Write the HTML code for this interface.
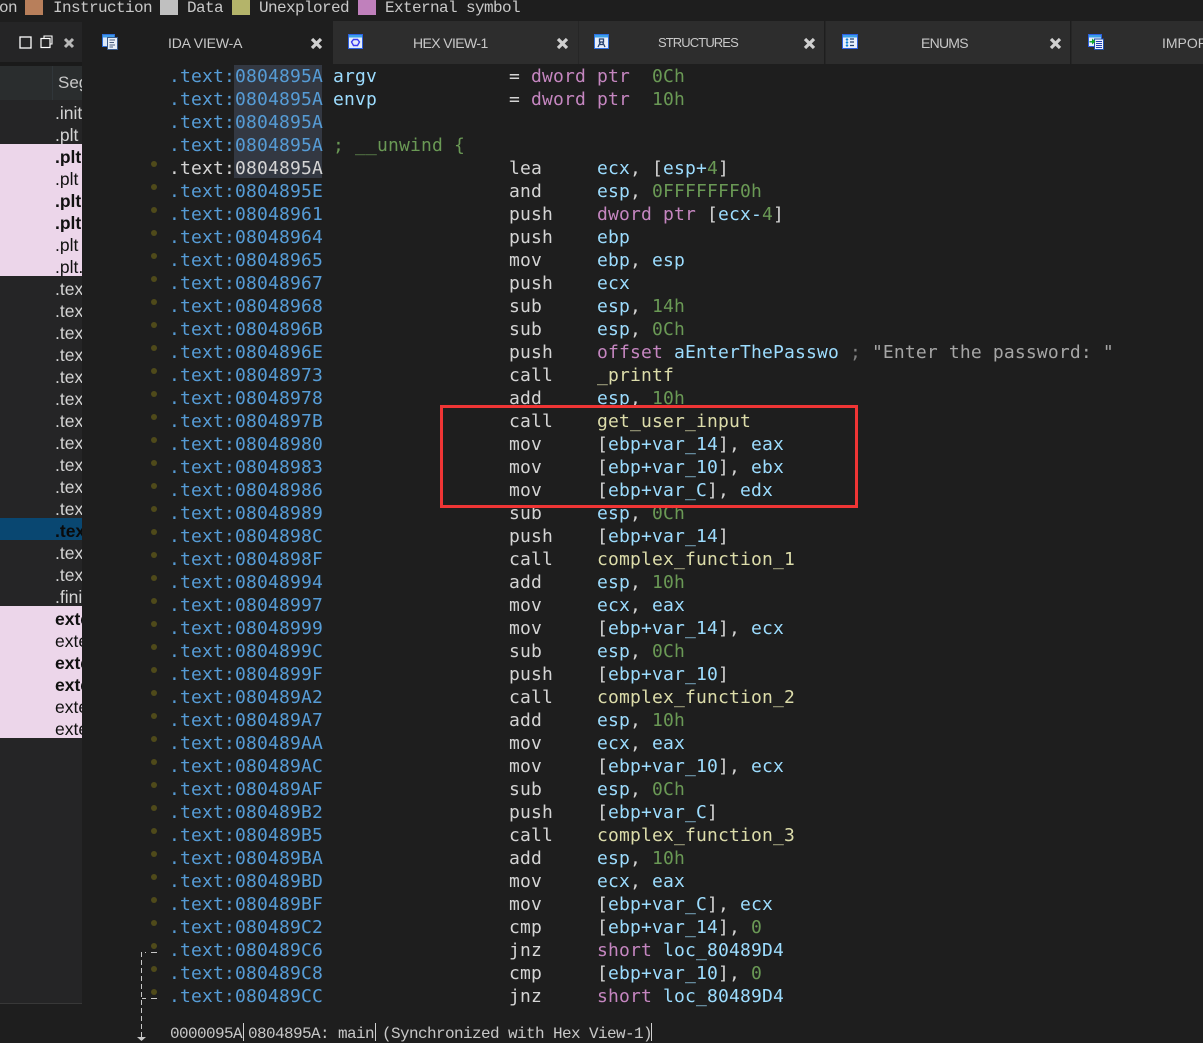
<!DOCTYPE html>
<html><head><meta charset="utf-8"><style>
html,body{margin:0;padding:0;background:#1e1e1e}
body{width:1203px;height:1041px;position:relative;overflow:hidden}
div,span.ab,svg{position:absolute}
.lg{font:16px/15px "Liberation Mono",monospace;letter-spacing:-.6px;color:#c8c8c8;top:1px;white-space:pre}
.sw{top:0;width:18px;height:15px}
.tab{top:21px;height:43px;width:245px;background:#2d2d2d}
.tt{top:34px;font:14px/18px "Liberation Sans",sans-serif;color:#c8c8c8;white-space:pre}
.x{top:37px;width:13px;height:13px}
.ic{top:34px;width:16px;height:16px}
#lp{left:0;top:100px;width:82px;height:903px;background:#252526;overflow:hidden}
#lp div{left:0;width:82px;height:22px;padding-left:55px;box-sizing:border-box;font:17.500px/26px "Liberation Sans",sans-serif;color:#d4d4d4;white-space:pre}
#lp .p{background:#ecd6ea;color:#111}
#lp .b{font-weight:bold}
#lp .s{background:#094771;color:#0a0a0a;font-weight:bold}
#c{left:0;top:0;width:1203px;height:1041px;font:18px/23px "DejaVu Sans Mono",monospace;letter-spacing:.16px}
#c div{height:23px;left:0;width:1203px}
#c span{position:absolute;top:0;white-space:pre}
#c .a{left:169px;color:#569cd6}
#c .n{left:333px;color:#9cdcfe}
#c .m{left:509px;color:#d4d4d4}
#c .o{left:597px;color:#9cdcfe}
#c .o i,#c .n i{position:static;font-style:normal}
i.k{color:#c586c0}i.u{color:#6a9955}i.f{color:#dcdcaa}i.g{color:#d4d4d4}i.c{color:#808080}i.t{color:#a6a6a6}
.dot{left:151px;width:6px;height:6px;border-radius:3px;background:#4f4a1a}
.st{top:1025px;font:16px/18px "Liberation Mono",monospace;letter-spacing:-.6px;color:#c8c8c8;white-space:pre}
</style></head><body>
<div class="lg" style="left:-1px">on</div>
<div class="sw" style="left:25px;background:#b87f5b"></div><div class="lg" style="left:53px">Instruction</div>
<div class="sw" style="left:160px;background:#c0c0c0"></div><div class="lg" style="left:187px">Data</div>
<div class="sw" style="left:232px;background:#b4b46a"></div><div class="lg" style="left:259px">Unexplored</div>
<div class="sw" style="left:358px;background:#c080bc"></div><div class="lg" style="left:385px">External symbol</div>

<div style="left:0;top:22px;width:82px;height:40px;background:#252526"></div>
<div style="left:0;top:62px;width:82px;height:4px;background:#1a1a1a"></div>
<div style="left:0;top:66px;width:82px;height:34px;background:#2a2d2e"></div>
<div style="left:52px;top:66px;width:1px;height:34px;background:#30363a"></div>
<div style="left:58px;top:66px;width:24px;height:34px;overflow:hidden;font:17px/34px 'Liberation Sans',sans-serif;color:#c8c8c8">Segment</div>
<svg style="left:19px;top:36px" width="15" height="14"><rect x="1" y="1" width="11" height="11" fill="none" stroke="#fff" stroke-width="1.3"/></svg>
<svg style="left:40px;top:35px" width="14" height="14"><path d="M4 3V1h8v8h-2" fill="none" stroke="#fff" stroke-width="1.1"/><rect x="1" y="3.5" width="9" height="9" fill="none" stroke="#fff" stroke-width="1.2"/></svg>
<svg class="x" style="left:63px" width="13" height="13"><path d="M2 2L10 10M10 2L2 10" stroke="#b8b8b8" stroke-width="3"/></svg>

<div id="lp">
<div style="top:0">.init</div><div style="top:22px">.plt</div>
<div class="p b" style="top:44px">.plt</div><div class="p" style="top:66px">.plt</div>
<div class="p b" style="top:88px">.plt</div><div class="p b" style="top:110px">.plt</div>
<div class="p" style="top:132px">.plt</div><div class="p" style="top:154px">.plt.</div>
<div style="top:176px">.text</div><div style="top:198px">.text</div><div style="top:220px">.text</div><div style="top:242px">.text</div>
<div style="top:264px">.text</div><div style="top:286px">.text</div><div style="top:308px">.text</div><div style="top:330px">.text</div>
<div style="top:352px">.text</div><div style="top:374px">.text</div><div style="top:396px">.text</div>
<div class="s" style="top:418px">.text</div>
<div style="top:440px">.text</div><div style="top:462px">.text</div><div style="top:484px">.fini</div>
<div class="p b" style="top:506px">extern</div><div class="p" style="top:528px">extern</div>
<div class="p b" style="top:550px">extern</div><div class="p b" style="top:572px">extern</div>
<div class="p" style="top:594px">extern</div><div class="p" style="top:616px">extern</div>
</div>
<div style="left:0;top:1003px;width:82px;height:1px;background:#383838"></div>

<div style="left:82px;top:21px;width:251px;height:43px;background:#1e1e1e"></div>
<div class="tab" style="left:333px"></div>
<div class="tab" style="left:579px"></div>
<div class="tab" style="left:825px"></div>
<div class="tab" style="left:1071px;width:132px"></div>
<div style="left:578px;top:21px;width:1px;height:43px;background:#262626"></div>
<div style="left:825px;top:21px;width:1px;height:43px;background:#262626"></div>
<div style="left:1071px;top:21px;width:1px;height:43px;background:#262626"></div>

<svg class="ic" style="left:102px" viewBox="0 0 16 16"><rect x="0.5" y="0.5" width="12" height="12" fill="#dbe9fb" stroke="#2f6fd8"/><rect x="1" y="1" width="11" height="2.5" fill="#3f9be8"/><rect x="5.5" y="3.5" width="10" height="12" fill="#e8eef5" stroke="#38598a"/><path d="M7.5 6H13M7.5 8.500H12M7.500 11H13M7.500 13H11" stroke="#4a5f80"/></svg>
<div class="tt" style="left:168px;letter-spacing:-.17px">IDA VIEW-A</div>
<svg class="x" style="left:310px" width="13" height="13"><path d="M2 2L11 11M11 2L2 11" stroke="#cfcfcf" stroke-width="3.200"/></svg>

<svg class="ic" style="left:348px" viewBox="0 0 16 16"><rect x="0.500" y="0.500" width="14" height="14" fill="#e4ecfb" stroke="#2e5fe0"/><rect x="1" y="1" width="13" height="2.500" fill="#3aa0ea"/><path d="M5.500 5.500H9.500L11.500 8L9.500 11.500H5.500L3.500 8Z" fill="#e4e8fb" stroke="#3a3af0" stroke-width="1.400"/></svg>
<div class="tt" style="left:413px;letter-spacing:-.6px">HEX VIEW-1</div>
<svg class="x" style="left:556px" width="13" height="13"><path d="M2 2L11 11M11 2L2 11" stroke="#cfcfcf" stroke-width="3.200"/></svg>

<svg class="ic" style="left:594px" viewBox="0 0 16 16"><rect x="0.500" y="0.500" width="14" height="14" fill="#e8eefb" stroke="#2e6fe0"/><rect x="1" y="1" width="13" height="2.500" fill="#3aa0ea"/><path d="M5.500 5H9.500V8H5.500ZM6.500 8L4 13M8.500 8L11 13M6 10.500H9" fill="none" stroke="#24406e" stroke-width="1.300"/></svg>
<div class="tt" style="left:658px;font-size:13px;letter-spacing:-.9px">STRUCTURES</div>
<svg class="x" style="left:803px" width="13" height="13"><path d="M2 2L11 11M11 2L2 11" stroke="#cfcfcf" stroke-width="3.200"/></svg>

<svg class="ic" style="left:842px" viewBox="0 0 16 16"><rect x="0.500" y="0.500" width="15" height="14" fill="#e8eefb" stroke="#2e5fe0"/><rect x="1" y="1" width="14" height="2.500" fill="#3aa0ea"/><path d="M8 5H12M8 8H12M8 11.500H12" stroke="#24406e" stroke-width="1.200"/><path d="M5 4L6.500 5.500L5 7L3.500 5.500ZM5 7L6.500 8.500L5 10L3.500 8.500ZM5 10L6.500 11.500L5 13L3.500 11.500Z" fill="#0b7fd8"/></svg>
<div class="tt" style="left:921px;letter-spacing:-.75px">ENUMS</div>
<svg class="x" style="left:1049px" width="13" height="13"><path d="M2 2L11 11M11 2L2 11" stroke="#cfcfcf" stroke-width="3.200"/></svg>

<svg class="ic" style="left:1088px" viewBox="0 0 16 16"><rect x="0.500" y="0.500" width="13" height="12" fill="#e8eefb" stroke="#2e5fe0"/><rect x="1" y="1" width="12" height="2.500" fill="#3aa0ea"/><rect x="6.500" y="5" width="9" height="10.500" fill="#eef2fb" stroke="#1f4fa8"/><path d="M8 7.500H14M8 9.500H14M8 11.500H14M8 13.500H14" stroke="#1f3fb0"/><path d="M1.500 7H4V4.500L7.500 7.500L4 10.500V8.500H1.500Z" fill="#16a52c"/></svg>
<div class="tt" style="left:1162px">IMPORTS</div>

<div style="left:234px;top:65px;width:88px;height:113px;background:#333842"></div>

<div id="c">
<div style="top:65px"><span class="a">.text:0804895A</span><span class="n">argv</span><span class="m">=</span><span class="o" style="left:531px"><i class="k">dword ptr</i>  <i class="u">0Ch</i></span></div>
<div style="top:88px"><span class="a">.text:0804895A</span><span class="n">envp</span><span class="m">=</span><span class="o" style="left:531px"><i class="k">dword ptr</i>  <i class="u">10h</i></span></div>
<div style="top:111px"><span class="a">.text:0804895A</span></div>
<div style="top:134px"><span class="a">.text:0804895A</span><span class="n"><i class="u">; __unwind {</i></span></div>
<div style="top:157px"><span class="a" style="color:#d4d4d4">.text:0804895A</span><span class="m">lea</span><span class="o">ecx<i class="g">,</i> <i class="g">[</i>esp+<i class="u">4</i><i class="g">]</i></span></div>
<div style="top:180px"><span class="a">.text:0804895E</span><span class="m">and</span><span class="o">esp<i class="g">,</i> <i class="u">0FFFFFFF0h</i></span></div>
<div style="top:203px"><span class="a">.text:08048961</span><span class="m">push</span><span class="o"><i class="k">dword ptr</i> <i class="g">[</i>ecx-<i class="u">4</i><i class="g">]</i></span></div>
<div style="top:226px"><span class="a">.text:08048964</span><span class="m">push</span><span class="o">ebp</span></div>
<div style="top:249px"><span class="a">.text:08048965</span><span class="m">mov</span><span class="o">ebp<i class="g">,</i> esp</span></div>
<div style="top:272px"><span class="a">.text:08048967</span><span class="m">push</span><span class="o">ecx</span></div>
<div style="top:295px"><span class="a">.text:08048968</span><span class="m">sub</span><span class="o">esp<i class="g">,</i> <i class="u">14h</i></span></div>
<div style="top:318px"><span class="a">.text:0804896B</span><span class="m">sub</span><span class="o">esp<i class="g">,</i> <i class="u">0Ch</i></span></div>
<div style="top:341px"><span class="a">.text:0804896E</span><span class="m">push</span><span class="o"><i class="k">offset</i> aEnterThePasswo <i class="c">;</i> <i class="t">"Enter the password: "</i></span></div>
<div style="top:364px"><span class="a">.text:08048973</span><span class="m">call</span><span class="o"><i class="f">_printf</i></span></div>
<div style="top:387px"><span class="a">.text:08048978</span><span class="m">add</span><span class="o">esp<i class="g">,</i> <i class="u">10h</i></span></div>
<div style="top:410px"><span class="a">.text:0804897B</span><span class="m">call</span><span class="o"><i class="f">get_user_input</i></span></div>
<div style="top:433px"><span class="a">.text:08048980</span><span class="m">mov</span><span class="o"><i class="g">[</i>ebp+var_14<i class="g">],</i> eax</span></div>
<div style="top:456px"><span class="a">.text:08048983</span><span class="m">mov</span><span class="o"><i class="g">[</i>ebp+var_10<i class="g">],</i> ebx</span></div>
<div style="top:479px"><span class="a">.text:08048986</span><span class="m">mov</span><span class="o"><i class="g">[</i>ebp+var_C<i class="g">],</i> edx</span></div>
<div style="top:502px"><span class="a">.text:08048989</span><span class="m">sub</span><span class="o">esp<i class="g">,</i> <i class="u">0Ch</i></span></div>
<div style="top:525px"><span class="a">.text:0804898C</span><span class="m">push</span><span class="o"><i class="g">[</i>ebp+var_14<i class="g">]</i></span></div>
<div style="top:548px"><span class="a">.text:0804898F</span><span class="m">call</span><span class="o"><i class="f">complex_function_1</i></span></div>
<div style="top:571px"><span class="a">.text:08048994</span><span class="m">add</span><span class="o">esp<i class="g">,</i> <i class="u">10h</i></span></div>
<div style="top:594px"><span class="a">.text:08048997</span><span class="m">mov</span><span class="o">ecx<i class="g">,</i> eax</span></div>
<div style="top:617px"><span class="a">.text:08048999</span><span class="m">mov</span><span class="o"><i class="g">[</i>ebp+var_14<i class="g">],</i> ecx</span></div>
<div style="top:640px"><span class="a">.text:0804899C</span><span class="m">sub</span><span class="o">esp<i class="g">,</i> <i class="u">0Ch</i></span></div>
<div style="top:663px"><span class="a">.text:0804899F</span><span class="m">push</span><span class="o"><i class="g">[</i>ebp+var_10<i class="g">]</i></span></div>
<div style="top:686px"><span class="a">.text:080489A2</span><span class="m">call</span><span class="o"><i class="f">complex_function_2</i></span></div>
<div style="top:709px"><span class="a">.text:080489A7</span><span class="m">add</span><span class="o">esp<i class="g">,</i> <i class="u">10h</i></span></div>
<div style="top:732px"><span class="a">.text:080489AA</span><span class="m">mov</span><span class="o">ecx<i class="g">,</i> eax</span></div>
<div style="top:755px"><span class="a">.text:080489AC</span><span class="m">mov</span><span class="o"><i class="g">[</i>ebp+var_10<i class="g">],</i> ecx</span></div>
<div style="top:778px"><span class="a">.text:080489AF</span><span class="m">sub</span><span class="o">esp<i class="g">,</i> <i class="u">0Ch</i></span></div>
<div style="top:801px"><span class="a">.text:080489B2</span><span class="m">push</span><span class="o"><i class="g">[</i>ebp+var_C<i class="g">]</i></span></div>
<div style="top:824px"><span class="a">.text:080489B5</span><span class="m">call</span><span class="o"><i class="f">complex_function_3</i></span></div>
<div style="top:847px"><span class="a">.text:080489BA</span><span class="m">add</span><span class="o">esp<i class="g">,</i> <i class="u">10h</i></span></div>
<div style="top:870px"><span class="a">.text:080489BD</span><span class="m">mov</span><span class="o">ecx<i class="g">,</i> eax</span></div>
<div style="top:893px"><span class="a">.text:080489BF</span><span class="m">mov</span><span class="o"><i class="g">[</i>ebp+var_C<i class="g">],</i> ecx</span></div>
<div style="top:916px"><span class="a">.text:080489C2</span><span class="m">cmp</span><span class="o"><i class="g">[</i>ebp+var_14<i class="g">],</i> <i class="u">0</i></span></div>
<div style="top:939px"><span class="a">.text:080489C6</span><span class="m">jnz</span><span class="o"><i class="k">short</i> loc_80489D4</span></div>
<div style="top:962px"><span class="a">.text:080489C8</span><span class="m">cmp</span><span class="o"><i class="g">[</i>ebp+var_10<i class="g">],</i> <i class="u">0</i></span></div>
<div style="top:985px"><span class="a">.text:080489CC</span><span class="m">jnz</span><span class="o"><i class="k">short</i> loc_80489D4</span></div>
</div>

<div style="left:0;top:2px">
<div class="dot" style="top:159px"></div><div class="dot" style="top:182px"></div><div class="dot" style="top:205px"></div><div class="dot" style="top:228px"></div><div class="dot" style="top:251px"></div><div class="dot" style="top:274px"></div><div class="dot" style="top:297px"></div><div class="dot" style="top:320px"></div><div class="dot" style="top:343px"></div><div class="dot" style="top:366px"></div><div class="dot" style="top:389px"></div><div class="dot" style="top:412px"></div><div class="dot" style="top:435px"></div><div class="dot" style="top:458px"></div><div class="dot" style="top:481px"></div><div class="dot" style="top:504px"></div><div class="dot" style="top:527px"></div><div class="dot" style="top:550px"></div><div class="dot" style="top:573px"></div><div class="dot" style="top:596px"></div><div class="dot" style="top:619px"></div><div class="dot" style="top:642px"></div><div class="dot" style="top:665px"></div><div class="dot" style="top:688px"></div><div class="dot" style="top:711px"></div><div class="dot" style="top:734px"></div><div class="dot" style="top:757px"></div><div class="dot" style="top:780px"></div><div class="dot" style="top:803px"></div><div class="dot" style="top:826px"></div><div class="dot" style="top:849px"></div><div class="dot" style="top:872px"></div><div class="dot" style="top:895px"></div><div class="dot" style="top:918px"></div><div class="dot" style="top:941px"></div><div class="dot" style="top:964px"></div><div class="dot" style="top:987px"></div>
</div>

<svg style="left:132px;top:945px" width="30" height="96"><path d="M9.500 92V7.500H14" fill="none" stroke="#c8c8c8" stroke-dasharray="5 3"/><path d="M10 53.500H14M19 7.500H25M19 53.500H25" stroke="#c8c8c8"/><path d="M5 92H14L9.500 96Z" fill="#c8c8c8"/></svg>

<div style="left:440px;top:405px;width:412px;height:97px;border:3px solid #f03535"></div>

<div class="st" style="left:170px">0000095A</div>
<div style="left:243px;top:1023px;width:1px;height:18px;background:#d0d0d0"></div>
<div class="st" style="left:248px">0804895A: main</div>
<div style="left:375px;top:1023px;width:1px;height:18px;background:#d0d0d0"></div>
<div class="st" style="left:382px">(Synchronized with Hex View-1)</div>
<div style="left:651px;top:1023px;width:1px;height:18px;background:#d0d0d0"></div>
</body></html>
